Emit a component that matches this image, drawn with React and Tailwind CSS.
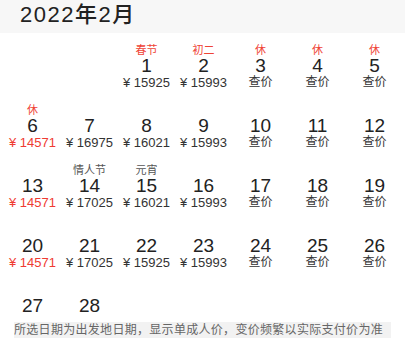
import React from "react";

const FONT = { fontFamily: '"Liberation Sans", "Noto Sans CJK SC", sans-serif' };

// null = blank cell before Feb 1
const days = [
  null,
  null,
  { d: 1, tag: "春节", hot: true, price: 15925 },
  { d: 2, tag: "初二", hot: true, price: 15993 },
  { d: 3, tag: "休", hot: true },
  { d: 4, tag: "休", hot: true },
  { d: 5, tag: "休", hot: true },
  { d: 6, tag: "休", hot: true, price: 14571, low: true },
  { d: 7, price: 16975 },
  { d: 8, price: 16021 },
  { d: 9, price: 15993 },
  { d: 10 },
  { d: 11 },
  { d: 12 },
  { d: 13, price: 14571, low: true },
  { d: 14, tag: "情人节", price: 17025 },
  { d: 15, tag: "元宵", price: 16021 },
  { d: 16, price: 15993 },
  { d: 17 },
  { d: 18 },
  { d: 19 },
  { d: 20, price: 14571, low: true },
  { d: 21, price: 17025 },
  { d: 22, price: 15925 },
  { d: 23, price: 15993 },
  { d: 24 },
  { d: 25 },
  { d: 26 },
  { d: 27, last: true },
  { d: 28, last: true },
];

const DayCell = ({ day }) => {
  if (!day) return <div />;
  return (
    <div className="flex flex-col items-center">
      <div
        className={
          "h-[14px] text-[11px] leading-[14px] " +
          (day.hot ? "text-[#ef4336]" : "text-[#555555]")
        }
      >
        {day.tag || ""}
      </div>
      <div className="h-[18px] text-[19px] leading-[18px] text-[#222222]">{day.d}</div>
      {!day.last &&
        (day.price ? (
          <div
            className={
              "h-[15px] text-[13px] leading-[15px] whitespace-nowrap " +
              (day.low ? "text-[#ef3b32]" : "text-[#333333]")
            }
          >
            ¥ {day.price}
          </div>
        ) : (
          <div className="h-[15px] text-[12px] leading-[15px] text-[#333333]">查价</div>
        ))}
    </div>
  );
};

export default function App() {
  return (
    <div className="w-[405px] h-[344px] bg-white overflow-hidden" style={FONT}>
      {/* month header */}
      <div className="h-[33px] bg-[#f7f7f7] pl-[20px]">
        <span className="text-[22px] leading-[30px] font-medium tracking-[1.5px] text-[#222222]">
          2022年2月
        </span>
      </div>

      <div className="grid grid-cols-7 gap-y-[13px] pt-[10px] pl-[4px] pr-[2px]">
        {days.map((day, i) => (
          <DayCell key={i} day={day} />
        ))}
      </div>

      <div className="mt-[7px] mx-[14px] h-[16px] bg-[#f2f2f2] text-[12px] leading-[16px] tracking-[0.3px] text-[#666666] whitespace-nowrap overflow-hidden">
        所选日期为出发地日期，显示单成人价，变价频繁以实际支付价为准
      </div>
    </div>
  );
}
